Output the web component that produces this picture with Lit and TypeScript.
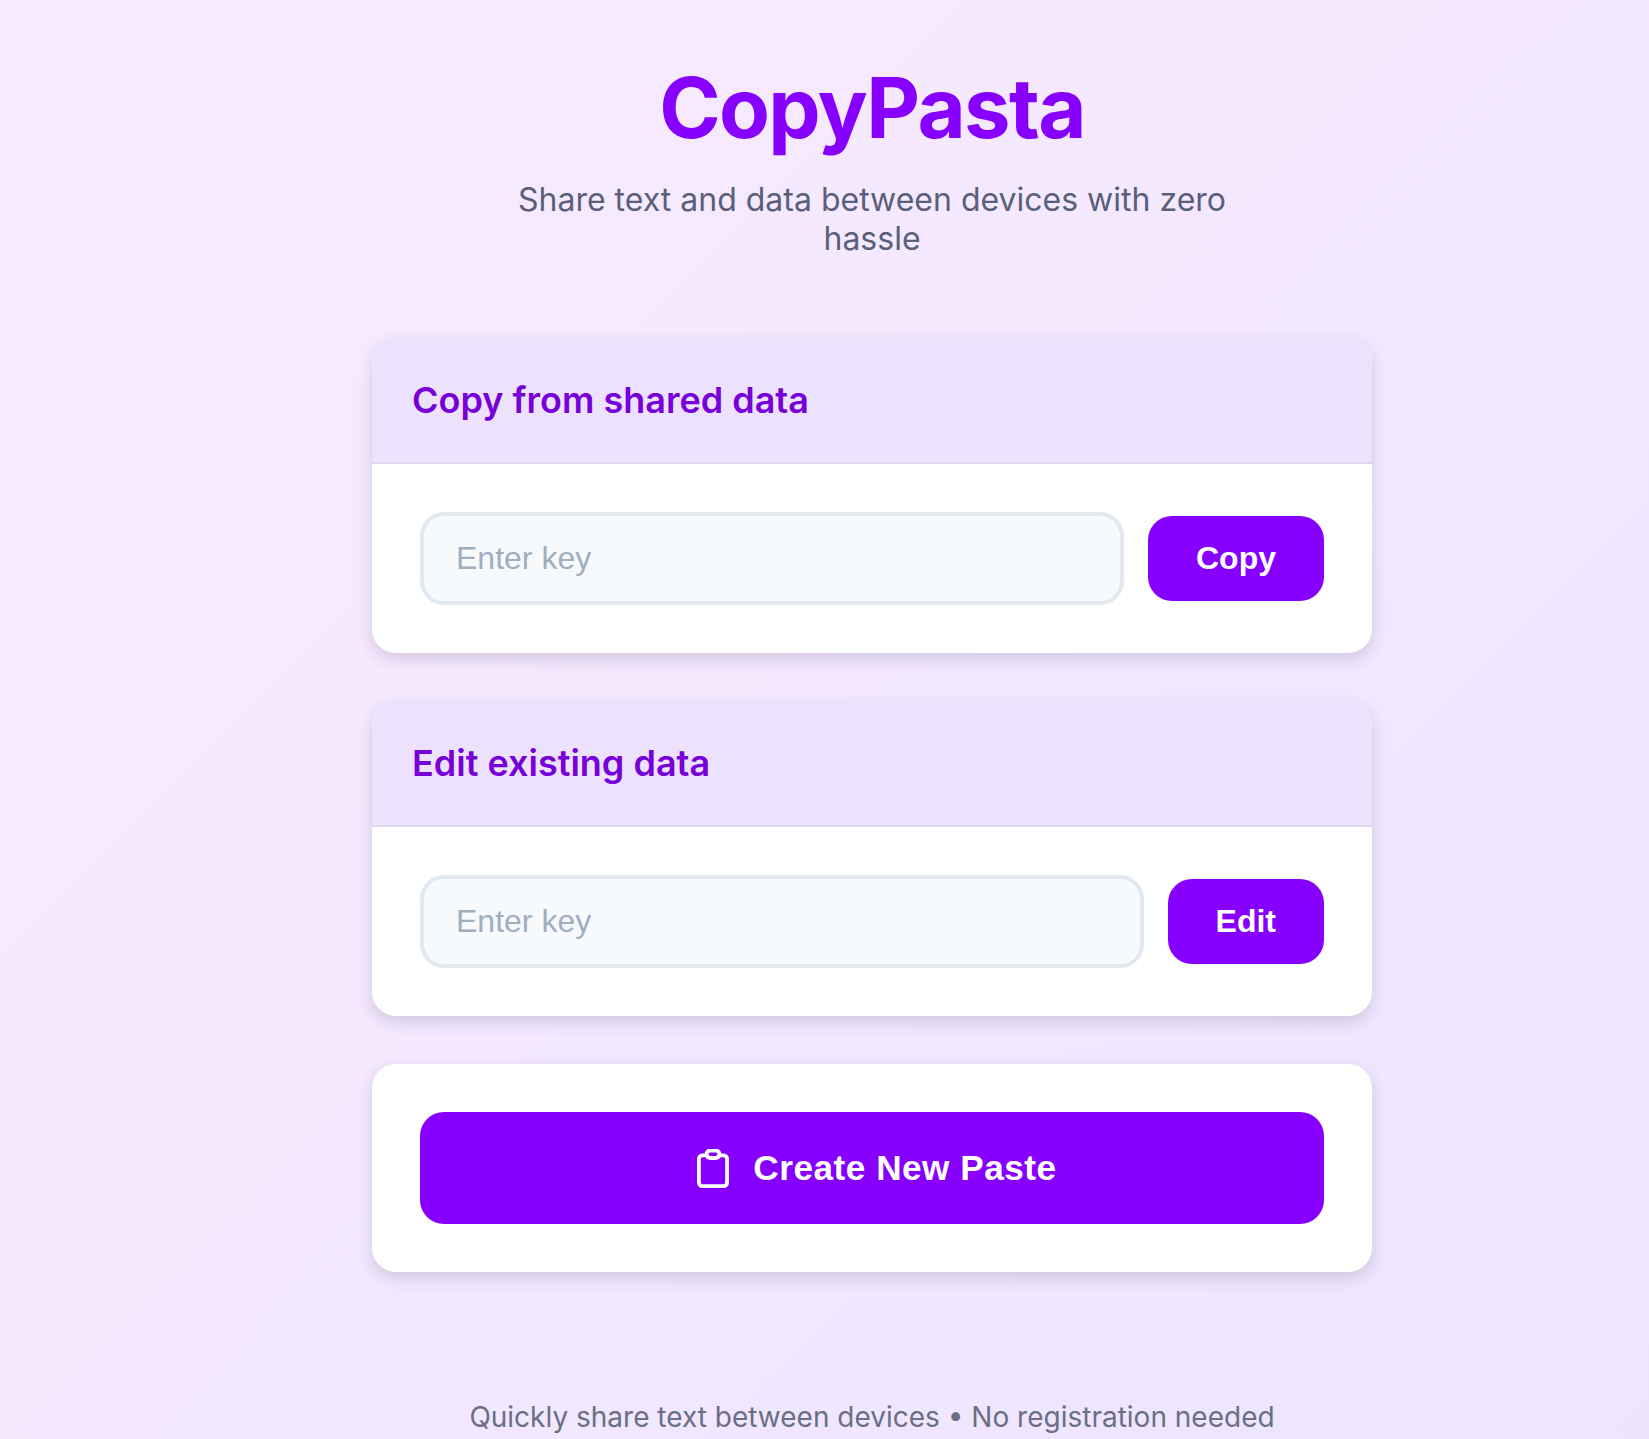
import { LitElement, html, css } from "lit";
import { customElement } from "lit/decorators.js";

@customElement("app-root")
export class AppRoot extends LitElement {
  static styles = css`
    :host {
      display: block;
      height: 1439px;
      overflow: hidden;
      background: linear-gradient(135deg, #f9ebff 0%, #ede5fe 100%);
      font-family: Inter, "Noto Sans", sans-serif;
      box-sizing: border-box;
    }
    .page {
      display: flex;
      flex-direction: column;
      align-items: center;
      padding: 56px 0 0 95px;
    }
    h1 {
      margin: 0;
      font-size: 83.2px;
      line-height: 104px;
      font-weight: 700;
      letter-spacing: -0.02em;
      color: #8700ff;
    }
    .sub {
      margin: 20px 0 0;
      width: 800px;
      text-align: center;
      font-size: 32px;
      line-height: 39px;
      color: #5a5f7a;
    }
    .cards {
      margin-top: 80px;
      width: 1000px;
      display: flex;
      flex-direction: column;
      gap: 48px;
    }
    .card {
      background: #fff;
      border-radius: 24px;
      box-shadow: 0 6px 16px rgba(40, 30, 70, 0.16);
      overflow: hidden;
    }
    .head {
      background: #ece2fd;
      padding: 40px;
      border-bottom: 2px solid #e2d8f2;
      height: 126px;
      box-sizing: border-box;
      display: flex;
      align-items: center;
    }
    h2 {
      margin: 0;
      font-size: 36px;
      font-weight: 600;
      color: #7700d9;
    }
    .body {
      padding: 48px;
    }
    .row {
      display: flex;
      align-items: center;
      gap: 24px;
    }
    input {
      flex: 1;
      min-width: 0;
      height: 93px;
      box-sizing: border-box;
      border: 4px solid #e2e8f0;
      border-radius: 24px;
      background: #f7fafc;
      padding: 0 32px;
      font: 400 32px "Liberation Sans", Arial, sans-serif;
      outline: none;
    }
    input::placeholder {
      color: #a0aec0;
      opacity: 1;
    }
    button {
      border: none;
      background: #8700ff;
      color: #fff;
      border-radius: 24px;
      font-family: "Liberation Sans", Arial, sans-serif;
      font-weight: 600;
      font-size: 32px;
      height: 85px;
      padding: 0 48px;
    }
    .create {
      width: 100%;
      height: 112px;
      font-size: 35.2px;
      letter-spacing: 0.5px;
      padding-left: 58px;
      display: flex;
      align-items: center;
      justify-content: center;
      gap: 24px;
    }
    .create svg {
      width: 32px;
      height: 39px;
      display: block;
    }
    footer {
      margin-top: 128px;
      font-size: 28px;
      line-height: 34px;
      color: #6b6f85;
    }
  `;

  render() {
    return html`
      <div class="page">
        <h1>CopyPasta</h1>
        <p class="sub">Share text and data between devices with zero hassle</p>
        <div class="cards">
          <section class="card">
            <div class="head"><h2>Copy from shared data</h2></div>
            <div class="body">
              <div class="row">
                <input placeholder="Enter key" />
                <button>Copy</button>
              </div>
            </div>
          </section>
          <section class="card">
            <div class="head"><h2>Edit existing data</h2></div>
            <div class="body">
              <div class="row">
                <input placeholder="Enter key" />
                <button>Edit</button>
              </div>
            </div>
          </section>
          <section class="card">
            <div class="body">
              <button class="create">
                <svg viewBox="0 0 32 39" fill="none" stroke="currentColor" stroke-width="3.8" stroke-linecap="round" stroke-linejoin="round">
                  <path d="M10 6.3H5.4A3.5 3.5 0 0 0 1.9 9.8v23.8a3.5 3.5 0 0 0 3.5 3.5h21.2a3.5 3.5 0 0 0 3.5-3.5V9.8a3.5 3.5 0 0 0-3.5-3.5H22" />
                  <rect x="9.5" y="1.6" width="13" height="7.4" rx="3.7" />
                </svg>
                Create New Paste
              </button>
            </div>
          </section>
        </div>
        <footer>Quickly share text between devices • No registration needed</footer>
      </div>
    `;
  }
}
